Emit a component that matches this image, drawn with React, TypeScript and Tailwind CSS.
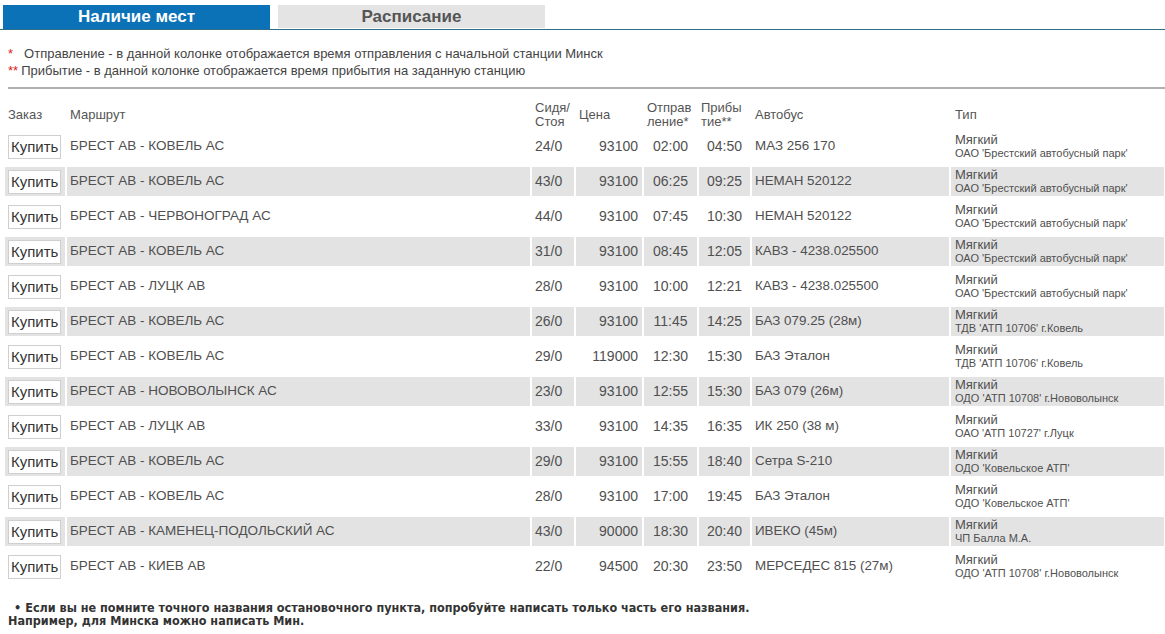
import React from "react";

type Row = {
  route: string;
  seats: string;
  price: string;
  dep: string;
  arr: string;
  bus: string;
  company: string;
};

const rows: Row[] = [
  { route: "БРЕСТ АВ - КОВЕЛЬ АС", seats: "24/0", price: "93100", dep: "02:00", arr: "04:50", bus: "МАЗ 256 170", company: "ОАО 'Брестский автобусный парк'" },
  { route: "БРЕСТ АВ - КОВЕЛЬ АС", seats: "43/0", price: "93100", dep: "06:25", arr: "09:25", bus: "НЕМАН 520122", company: "ОАО 'Брестский автобусный парк'" },
  { route: "БРЕСТ АВ - ЧЕРВОНОГРАД АС", seats: "44/0", price: "93100", dep: "07:45", arr: "10:30", bus: "НЕМАН 520122", company: "ОАО 'Брестский автобусный парк'" },
  { route: "БРЕСТ АВ - КОВЕЛЬ АС", seats: "31/0", price: "93100", dep: "08:45", arr: "12:05", bus: "КАВЗ - 4238.025500", company: "ОАО 'Брестский автобусный парк'" },
  { route: "БРЕСТ АВ - ЛУЦК АВ", seats: "28/0", price: "93100", dep: "10:00", arr: "12:21", bus: "КАВЗ - 4238.025500", company: "ОАО 'Брестский автобусный парк'" },
  { route: "БРЕСТ АВ - КОВЕЛЬ АС", seats: "26/0", price: "93100", dep: "11:45", arr: "14:25", bus: "БАЗ 079.25 (28м)", company: "ТДВ 'АТП 10706' г.Ковель" },
  { route: "БРЕСТ АВ - КОВЕЛЬ АС", seats: "29/0", price: "119000", dep: "12:30", arr: "15:30", bus: "БАЗ Эталон", company: "ТДВ 'АТП 10706' г.Ковель" },
  { route: "БРЕСТ АВ - НОВОВОЛЫНСК АС", seats: "23/0", price: "93100", dep: "12:55", arr: "15:30", bus: "БАЗ 079 (26м)", company: "ОДО 'АТП 10708' г.Нововолынск" },
  { route: "БРЕСТ АВ - ЛУЦК АВ", seats: "33/0", price: "93100", dep: "14:35", arr: "16:35", bus: "ИК 250 (38 м)", company: "ОАО 'АТП 10727' г.Луцк" },
  { route: "БРЕСТ АВ - КОВЕЛЬ АС", seats: "29/0", price: "93100", dep: "15:55", arr: "18:40", bus: "Сетра S-210", company: "ОДО 'Ковельское АТП'" },
  { route: "БРЕСТ АВ - КОВЕЛЬ АС", seats: "28/0", price: "93100", dep: "17:00", arr: "19:45", bus: "БАЗ Эталон", company: "ОДО 'Ковельское АТП'" },
  { route: "БРЕСТ АВ - КАМЕНЕЦ-ПОДОЛЬСКИЙ АС", seats: "43/0", price: "90000", dep: "18:30", arr: "20:40", bus: "ИВЕКО (45м)", company: "ЧП Балла М.А." },
  { route: "БРЕСТ АВ - КИЕВ АВ", seats: "22/0", price: "94500", dep: "20:30", arr: "23:50", bus: "МЕРСЕДЕС 815 (27м)", company: "ОДО 'АТП 10708' г.Нововолынск" },
];

export default function App() {
  return (
    <div className="w-[1165px] h-[634px] bg-white overflow-hidden font-['Liberation_Sans',Arial,sans-serif] text-[#505050]">
      {/* Tabs */}
      <div className="flex pt-[5px] pl-[3px] gap-[8px] border-b-[1px] border-[#2c6f86]">
        <div className="w-[267px] h-[24px] bg-[#0b72b8] text-white font-bold text-[17px] leading-[24px] text-center">
          Наличие мест
        </div>
        <div className="w-[267px] h-[23px] bg-[#e4e4e4] text-[#555] font-bold text-[17px] leading-[23px] text-center">
          Расписание
        </div>
      </div>

      {/* Footnotes */}
      <div className="pl-[8px] pt-[15px] text-[13px] leading-[17px] text-[#444]">
        <div>
          <span className="text-[#e02020]">*</span>
          <span className="ml-[11px]">Отправление - в данной колонке отображается время отправления с начальной станции Минск</span>
        </div>
        <div>
          <span className="text-[#e02020]">**</span>
          <span className="ml-[3px]">Прибытие - в данной колонке отображается время прибытия на заданную станцию</span>
        </div>
      </div>

      <div className="ml-[8px] mt-[8px] h-[2px] bg-[#b0b0b0]" />

      {/* Table */}
      <table className="ml-[3px] mt-[3px] w-[1163px] table-fixed border-separate border-spacing-x-[2px] border-spacing-y-[6px]">
        <colgroup>
          <col className="w-[60px]" />
          <col className="w-[463px]" />
          <col className="w-[42px]" />
          <col className="w-[66px]" />
          <col className="w-[53px]" />
          <col className="w-[51px]" />
          <col className="w-[197px]" />
          <col className="w-[213px]" />
        </colgroup>
        <thead>
          <tr className="h-[28px] text-[13px] leading-[14px] text-[#555]">
            <th className="text-left font-normal pl-[3px] align-middle"><div className="relative top-[3px]">Заказ</div></th>
            <th className="text-left font-normal pl-[3px] align-middle"><div className="relative top-[3px]">Маршрут</div></th>
            <th className="text-left font-normal pl-[3px] align-middle"><div className="relative top-[3px]">Сидя/<br />Стоя</div></th>
            <th className="text-left font-normal pl-[3px] align-middle"><div className="relative top-[3px]">Цена</div></th>
            <th className="text-left font-normal pl-[3px] align-middle"><div className="relative top-[3px]">Отправ<br />ление*</div></th>
            <th className="text-left font-normal pl-[2px] align-middle"><div className="relative top-[3px]">Прибы<br />тие**</div></th>
            <th className="text-left font-normal pl-[3px] align-middle"><div className="relative top-[3px]">Автобус</div></th>
            <th className="text-left font-normal pl-[4px] align-middle"><div className="relative top-[3px]">Тип</div></th>
          </tr>
        </thead>
        <tbody>
          {rows.map((r, i) => {
            const bg = i % 2 === 1 ? "bg-[#e3e3e3]" : "bg-white";
            return (
              <tr key={i} className="h-[29px] text-[14px]">
                <td className={`${bg} pl-[3px] align-middle`}>
                  <button className="h-[24px] px-[2px] bg-white border border-[#cfcfcf] text-[15px] leading-[20px] text-[#333] font-['Liberation_Sans',Arial,sans-serif]">
                    Купить
                  </button>
                </td>
                <td className={`${bg} pl-[3px] align-middle whitespace-nowrap text-[13.5px]`}>{r.route}</td>
                <td className={`${bg} pl-[3px] align-middle`}>{r.seats}</td>
                <td className={`${bg} pr-[4px] text-right align-middle`}>{r.price}</td>
                <td className={`${bg} text-center align-middle`}>{r.dep}</td>
                <td className={`${bg} text-center align-middle`}>{r.arr}</td>
                <td className={`${bg} pl-[3px] align-middle whitespace-nowrap text-[13.4px]`}>{r.bus}</td>
                <td className={`${bg} pl-[4px] align-middle whitespace-nowrap`}>
                  <div className="text-[13px] leading-[13px]">Мягкий</div>
                  <div className="text-[11px] leading-[14px]">{r.company}</div>
                </td>
              </tr>
            );
          })}
        </tbody>
      </table>

      {/* Bottom note */}
      <div className="pl-[8px] mt-[14px] text-[12.5px] leading-[13px] font-bold text-[#333] font-['DejaVu_Sans_Condensed','DejaVu_Sans',sans-serif]">
        <div>
          <span className="ml-[6px] mr-[4px]">•</span>Если вы не помните точного названия остановочного пункта, попробуйте написать только часть его названия.
        </div>
        <div>Например, для Минска можно написать Мин.</div>
      </div>
    </div>
  );
}
